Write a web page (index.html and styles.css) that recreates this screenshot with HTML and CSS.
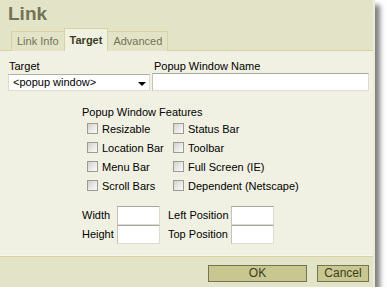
FILE: index.html
```html
<!DOCTYPE html>
<html>
<head>
<meta charset="utf-8">
<link rel="stylesheet" href="styles.css">
</head>
<body>
<div class="dialog">
  <div class="header">
    <div class="title">Link</div>
    <div class="tabs">
      <div class="tab">Link Info</div>
      <div class="tab selected">Target</div>
      <div class="tab">Advanced</div>
    </div>
  </div>
  <div class="content">
    <div class="row1">
      <div class="field">
        <div class="label">Target</div>
        <div class="select"><span>&lt;popup window&gt;</span><span class="arrow"></span></div>
      </div>
      <div class="field">
        <div class="label name-label">Popup Window Name</div>
        <div class="input wide"></div>
      </div>
    </div>
    <div class="features">
      <div class="label">Popup Window Features</div>
      <div class="checks">
        <div class="check"><span class="box"></span>Resizable</div>
        <div class="check"><span class="box"></span>Status Bar</div>
        <div class="check"><span class="box"></span>Location Bar</div>
        <div class="check"><span class="box"></span>Toolbar</div>
        <div class="check"><span class="box"></span>Menu Bar</div>
        <div class="check"><span class="box"></span>Full Screen (IE)</div>
        <div class="check"><span class="box"></span>Scroll Bars</div>
        <div class="check"><span class="box"></span>Dependent (Netscape)</div>
      </div>
      <div class="sizes">
        <div class="slabel">Width</div>
        <div class="input small"></div>
        <div class="slabel pad">Left Position</div>
        <div class="input small"></div>
        <div class="slabel">Height</div>
        <div class="input small"></div>
        <div class="slabel pad">Top Position</div>
        <div class="input small"></div>
      </div>
    </div>
  </div>
  <div class="footer">
    <div class="button ok">OK</div>
    <div class="button cancel">Cancel</div>
  </div>
</div>
</body>
</html>
```

FILE: styles.css
```css
html, body {
  margin: 0;
  padding: 0;
  background: #ffffff;
}
body {
  font-family: "Liberation Sans", Arial, sans-serif;
  font-size: 11px;
  line-height: 13px;
  color: #000;
}
.dialog {
  width: 375px;
  height: 287px;
  display: flex;
  flex-direction: column;
  background: #f1f1e3;
  box-shadow: 5px 5px 5px rgba(0, 0, 0, 0.5);
  box-sizing: border-box;
  border-right: 2px solid #ecebd6;
}
.header {
  background: #e3e3c7;
}
.title {
  font-size: 19px;
  line-height: 22px;
  font-weight: bold;
  color: #737357;
  padding: 3px 8px;
}
.tabs {
  display: flex;
  align-items: flex-end;
  height: 22px;
  padding-left: 11px;
  border-bottom: 1px solid #d5d59d;
}
.tab {
  border: 1px solid #d5d59d;
  border-bottom: none;
  padding: 3px 5px 3px;
  background: #e3e3c7;
  color: #737357;
  margin-bottom: -1px;
  margin-right: -1px;
}
.tab.selected {
  padding-top: 5px;
  padding-bottom: 4px;
  font-weight: bold;
  color: #3b3b1f;
  background: #f1f1e3;
  position: relative;
  z-index: 1;
}
.content {
  flex: 1;
  padding: 9px 0 0 8px;
  border-bottom: 1px solid #d5d59d;
  box-shadow: inset 0 -1px 0 #f8f8ee;
}
.row1 {
  display: grid;
  grid-template-columns: 142px 217px;
  column-gap: 2px;
}
.label {
  padding-left: 1px;
}
.name-label {
  padding-left: 2px;
}
.select {
  margin-top: 1px;
  height: 17px;
  box-sizing: border-box;
  background: #fff;
  border: 1px solid #dcdccf;
  border-top-color: #b0b0a0;
  display: flex;
  align-items: center;
  justify-content: space-between;
  padding: 0 3px 0 4px;
}
.arrow {
  width: 0;
  height: 0;
  border-left: 4px solid transparent;
  border-right: 4px solid transparent;
  border-top: 4px solid #000;
  margin-top: 2px;
}
.input {
  background: #fff;
  box-sizing: border-box;
  border: 1px solid #dcdcd0;
  border-top-color: #a7a7a0;
  border-left-color: #c4c4bc;
}
.input.wide {
  height: 18px;
}
.features {
  margin-top: 15px;
  margin-left: 74px;
}
.features > .label {
  padding-left: 0;
  margin-bottom: 1px;
}
.checks {
  display: grid;
  grid-template-columns: 86px auto;
  grid-auto-rows: 19px;
  padding-left: 5px;
}
.check {
  display: flex;
  align-items: center;
  line-height: 19px;
}
.box {
  width: 11px;
  height: 11px;
  box-sizing: border-box;
  border: 1px solid #9c9c94;
  background: linear-gradient(135deg, #d2d2cc 0%, #ececea 60%, #fafafa 100%);
  margin-right: 4px;
  margin-top: -3px;
}
.sizes {
  margin-top: 10px;
  display: grid;
  grid-template-columns: 35px 43px 71px 43px;
  grid-template-rows: 19px 19px;
}
.slabel {
  line-height: 19px;
}
.slabel.pad {
  padding-left: 8px;
}
.input.small {
  height: 19px;
}
.footer {
  background: #e3e3c7;
  display: flex;
  justify-content: flex-end;
  gap: 10px;
  padding: 8px 4px 5px 0;
}
.button {
  height: 17px;
  box-sizing: border-box;
  border: 1px solid #737357;
  background: #c7c78f;
  color: #3b3b1f;
  text-align: center;
  line-height: 15px;
  font-size: 12px;
}
.ok {
  width: 99px;
}
.cancel {
  width: 52px;
}
```
